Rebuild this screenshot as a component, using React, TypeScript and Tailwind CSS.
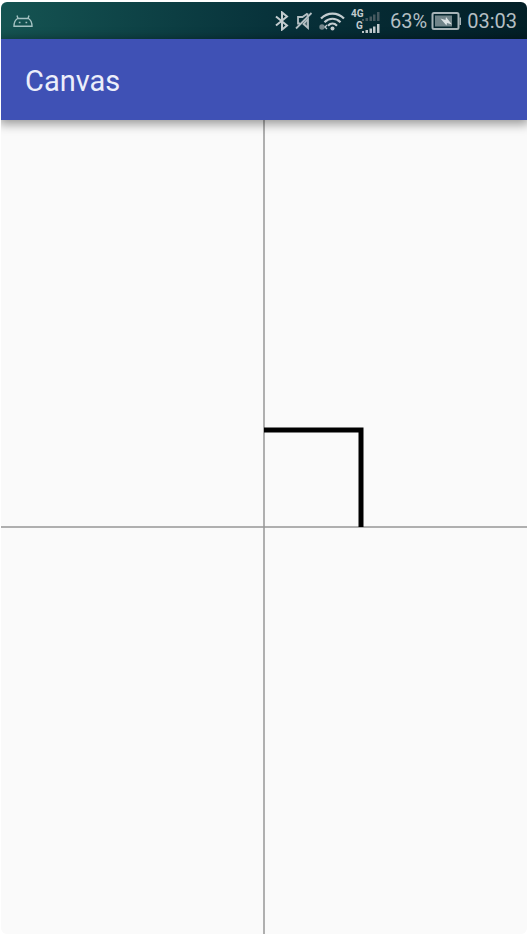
function AndroidIcon() {
  return (
    <svg className="h-5 w-5" viewBox="0 0 20 20" fill="none" stroke="#a3c1c1" strokeWidth="1.400">
      <path d="M1 15.300h18c0-3.500-1.200-6.300-3.500-7.800h-11C2.200 9 1 11.800 1 15.300z" />
      <path d="M5 7.500 4 4.500M15 7.500l1-3" />
      <path d="M5.800 11.500h1.700M12.500 11.500h1.700" strokeWidth="1.700" />
    </svg>
  );
}

function BluetoothIcon() {
  return (
    <svg className="h-5 w-4" viewBox="0 0 16 20" fill="none" stroke="#c3cccf" strokeWidth="2">
      <path d="m2 5.500 11 9-5 4.100V1.400l5 4.100-11 9" />
    </svg>
  );
}

function MutedIcon() {
  return (
    <svg className="h-5 w-5" viewBox="0 0 20 20" fill="none" stroke="#b4bfc3" strokeWidth="1.800">
      <path d="M2 17.500 17.500 2" />
      <path d="M13.500 2.500 8.500 6H4v6.500h2" />
      <path d="M13.500 2.500v3" />
      <path d="m9.500 13 4.500 4V8z" fill="#b4bfc3" fillOpacity=".4" />
    </svg>
  );
}

function WifiIcon() {
  return (
    <svg className="h-5 w-7" viewBox="0 0 28 20" fill="none" stroke="#c3cccf" strokeWidth="2.200">
      <path d="M3 7.500c6.500-6.600 16.500-6.600 23 0" />
      <path d="M6.500 11.200c4.700-4.600 11.300-4.600 16 0" />
      <path d="M10 14.700c2.700-2.700 6.300-2.700 9 0" />
      <circle cx="14.500" cy="17.500" r="2" fill="#c3cccf" stroke="none" />
      <circle cx="4" cy="16" r="2.700" fill="#75878c" stroke="none" />
      <path d="m9 14-2 2 2 2" strokeWidth="1.300" />
    </svg>
  );
}

function SignalIcon() {
  return (
    <svg className="h-7 w-8" viewBox="0 0 32 28" fill="#c3cccf" fontFamily="Roboto, sans-serif" fontWeight="700">
      <text x="1" y="10" fontSize="10">4G</text>
      <text x="6" y="22" fontSize="10">G</text>
      <path
        fill="#46595f"
        d="M12 12h2v2h-2zM15.500 11h2.500v3h-2.500zM19.500 9.500H22V14h-2.500zM23 7.500h2.500V14H23zM27 5h2.500v9H27z"
      />
      <path d="M12 24h2v2h-2zM15.500 23h2.500v3h-2.500zM19.500 21.500H22V26h-2.500zM23 19.500h2.500V26H23zM27 17h2.500v9H27z" />
    </svg>
  );
}

function BatteryIcon() {
  return (
    <svg className="h-5 w-8" viewBox="0 0 32 20" fill="none">
      <rect x="1.500" y="2" width="26" height="16" rx="1.500" stroke="#a7b4b8" strokeWidth="2" />
      <path d="M4 4.500h17v11H4z" fill="#71858a" />
      <path d="M28.500 6.500H30V14h-1.500z" fill="#a7b4b8" />
      <path d="m9.500 7.500 5 1.500.5-3 6 7.500-5-1.500-.5 2.500z" fill="#dce3e5" />
    </svg>
  );
}

function StatusBar() {
  return (
    <div className="flex h-[37px] items-center bg-linear-to-r from-[#155452] via-[#073039] via-55% to-[#031f27] pr-2.5 pl-3 text-xl text-[#b4bfc3]">
      <AndroidIcon />
      <div className="ml-auto flex items-center">
        <div className="mr-2 flex items-center gap-1">
          <BluetoothIcon />
          <MutedIcon />
          <WifiIcon />
          <SignalIcon />
        </div>
        <span className="mr-1">63%</span>
        <BatteryIcon />
        <time className="ml-1">03:03</time>
      </div>
    </div>
  );
}

function Drawing() {
  return (
    <svg className="w-full flex-1 bg-[#fafafa]" role="img" aria-label="Canvas axes">
      <g stroke="#969696" strokeWidth="1.500">
        <line x1="50%" y1="0" x2="50%" y2="100%" />
        <line x1="0" y1="50%" x2="100%" y2="50%" />
      </g>
      <svg x="50%" y="50%" overflow="visible">
        <path d="M0-97H97V0" fill="none" stroke="#000" strokeWidth="5" />
      </svg>
    </svg>
  );
}

export default function App() {
  return (
    <div className="flex min-h-screen flex-col bg-white px-px pt-0.5 pb-px font-[Roboto,sans-serif]">
      <main className="flex flex-1 flex-col overflow-hidden rounded-md">
        <StatusBar />
        <header className="z-10 flex h-[81px] items-center bg-[#3f51b5] px-6 pt-1 shadow-[0_2px_10px_2px_rgba(0,0,0,0.4)]">
          <h1 className="text-[29px] text-[#eceefa]">Canvas</h1>
        </header>
        <Drawing />
      </main>
    </div>
  );
}
